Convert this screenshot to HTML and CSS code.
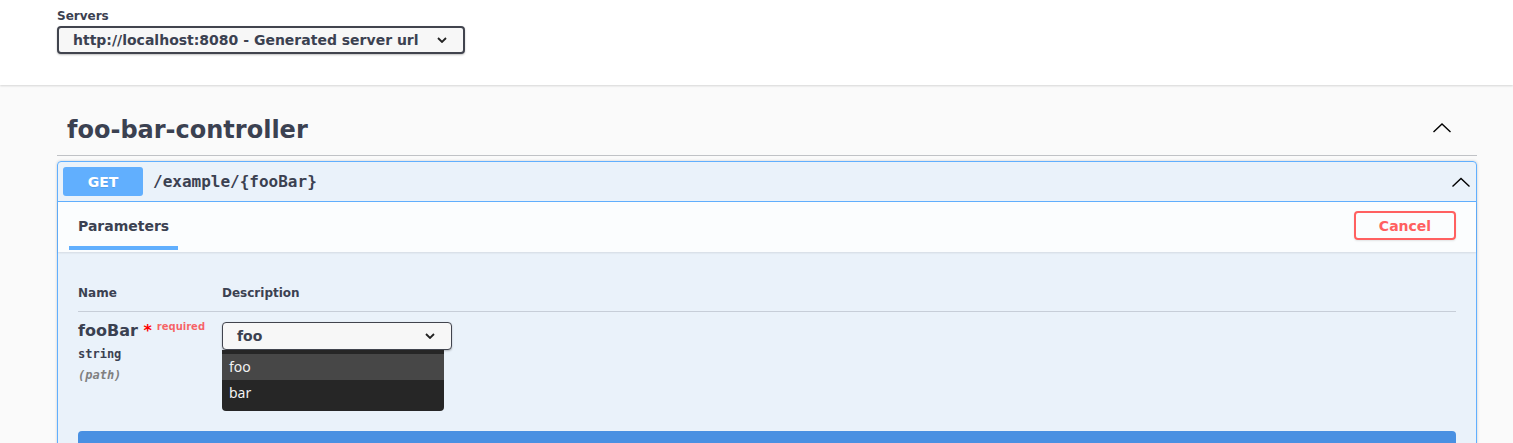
FILE: index.html
```html
<!DOCTYPE html>
<html lang="en">
<head>
<meta charset="utf-8">
<title>Swagger UI</title>
<link rel="stylesheet" href="styles.css">
</head>
<body>
<div class="scheme-container">
  <div class="schemes">
    <span class="servers-title">Servers</span>
    <div class="server-select">
      <span>http://localhost:8080 - Generated server url</span>
      <svg class="sel-chev" width="10" height="6" viewBox="0 0 10 6"><polyline points="1,1 5,5 9,1" fill="none" stroke="#222" stroke-width="1.8"/></svg>
    </div>
  </div>
</div>

<div class="main">
  <div class="opblock-tag">
    <h3 class="tag-title">foo-bar-controller</h3>
    <svg class="arrow tag-arrow" width="20" height="20" viewBox="0 0 20 20"><path d="M1.5 14 10 6l8.5 8" fill="none" stroke="#000" stroke-width="1.4"/></svg>
  </div>

  <div class="opblock">
    <div class="opblock-summary">
      <span class="method">GET</span>
      <span class="path">/example/{fooBar}</span>
      <svg class="arrow op-arrow" width="20" height="20" viewBox="0 0 20 20"><path d="M1.5 14.4 10 6.5l8.5 7.9" fill="none" stroke="#000" stroke-width="1.4"/></svg>
    </div>
    <div class="section-header">
      <div class="tab-item"><h4>Parameters</h4><span class="tab-line"></span></div>
      <button class="btn-cancel">Cancel</button>
    </div>
    <div class="table-container">
      <div class="param-row head">
        <div class="col-name">Name</div>
        <div class="col-desc">Description</div>
      </div>
      <div class="param-row body">
        <div class="col-name">
          <div class="param-name">fooBar<span class="star">&nbsp;*</span><span class="req">required</span></div>
          <div class="param-type">string</div>
          <div class="param-in">(path)</div>
        </div>
        <div class="col-desc">
          <div class="select-wrap">
            <div class="param-select">
              <span>foo</span>
              <svg class="sel-chev" width="10" height="6" viewBox="0 0 10 6"><polyline points="1,1 5,5 9,1" fill="none" stroke="#222" stroke-width="1.8"/></svg>
            </div>
            <div class="dropdown">
              <div class="opt active">foo</div>
              <div class="opt">bar</div>
            </div>
          </div>
        </div>
      </div>
    </div>
    <div class="execute-wrapper">
      <div class="btn-execute"></div>
    </div>
  </div>
</div>
</body>
</html>
```

FILE: styles.css
```css
* { box-sizing: border-box; }
html, body { margin: 0; padding: 0; }
body {
  font-family: "DejaVu Sans", sans-serif;
  color: #3b4151;
  background: #fafafa;
  overflow: hidden;
}
.scheme-container {
  background: #fff;
  height: 85px;
  box-shadow: 0 1px 2px 0 rgba(0,0,0,.15);
  padding: 8px 0 0 57px;
  position: relative;
}
.schemes { display: flex; flex-direction: column; align-items: flex-start; }
.servers-title {
  font-size: 12px;
  font-weight: bold;
  line-height: 16px;
}
.server-select {
  margin-top: 2px;
  width: 408px;
  height: 28px;
  border: 2px solid #41444e;
  border-radius: 4px;
  background: #f7f7f7;
  box-shadow: 0 1px 2px 0 rgba(0,0,0,.25);
  display: flex;
  align-items: center;
  justify-content: space-between;
  padding: 0 16px 0 14px;
  font-size: 14px;
  font-weight: bold;
  color: #3b4151;
}
.sel-chev { display: block; }
.main {
  padding: 17px 36px 0 57px;
}
.opblock-tag {
  height: 54px;
  border-bottom: 1px solid rgba(59,65,81,.3);
  display: flex;
  align-items: center;
  justify-content: space-between;
  padding: 2px 25px 0 10px;
}
.tag-title {
  margin: 0;
  font-size: 24px;
  line-height: 28px;
  font-weight: bold;
}
.arrow { display: block; }
.tag-arrow { position: relative; top: -2px; }
.opblock {
  margin-top: 5px;
  border: 1px solid #61affe;
  border-radius: 4px;
  background: rgba(97,175,254,.1);
  box-shadow: 0 0 3px rgba(0,0,0,.19);
  height: 400px;
}
.opblock-summary {
  display: flex;
  align-items: center;
  padding: 5px;
  border-bottom: 1px solid #61affe;
}
.method {
  width: 80px;
  height: 29px;
  background: #61affe;
  border-radius: 3px;
  color: #fff;
  font-size: 14px;
  font-weight: bold;
  display: flex;
  align-items: center;
  justify-content: center;
  text-shadow: 0 1px 0 rgba(0,0,0,.1);
}
.path {
  padding: 0 10px;
  font-family: "DejaVu Sans Mono", monospace;
  font-weight: bold;
  font-size: 16px;
  color: #3b4151;
  flex: 1;
}
.section-header {
  height: 50px;
  background: rgba(255,255,255,.8);
  box-shadow: 0 1px 2px rgba(0,0,0,.1);
  display: flex;
  align-items: center;
  justify-content: space-between;
  padding: 0 20px;
}
.tab-item {
  position: relative;
  align-self: stretch;
  display: flex;
  align-items: center;
}
.tab-item h4 {
  margin: 0;
  font-size: 14px;
  font-weight: bold;
  line-height: 18px;
  position: relative;
  top: -1px;
}
.tab-line {
  position: absolute;
  left: -9px;
  right: -9px;
  bottom: 2px;
  height: 4px;
  background: #61affe;
}
.btn-cancel {
  width: 102px;
  height: 29px;
  border: 2px solid #ff6060;
  border-radius: 4px;
  background: transparent;
  color: #ff6060;
  font-family: "DejaVu Sans", sans-serif;
  font-size: 14px;
  font-weight: bold;
  box-shadow: 0 1px 2px rgba(0,0,0,.1);
  padding: 0;
  margin-top: -3px;
}
.table-container {
  padding: 20px 20px 0 20px;
}
.param-row { display: flex; }
.param-row.head {
  font-size: 12px;
  font-weight: bold;
  line-height: 15px;
  padding: 14px 0 10px;
  border-bottom: 1px solid rgba(59,65,81,.2);
}
.param-row.body { padding: 10px 0; }
.col-name { width: 144px; }
.col-desc { flex: 1; }
.param-name {
  font-size: 16px;
  line-height: 18px;
  font-weight: bold;
  white-space: nowrap;
}
.star { color: red; }
.req {
  font-size: 10px;
  color: rgba(255,0,0,.6);
  position: relative;
  top: -6px;
  padding: 5px;
}
.param-type {
  font-family: "DejaVu Sans Mono", monospace;
  font-weight: bold;
  font-size: 12px;
  line-height: 14px;
  margin-top: 5px;
}
.param-in {
  font-family: "DejaVu Sans Mono", monospace;
  font-weight: bold;
  font-style: italic;
  font-size: 12px;
  line-height: 14px;
  color: #808080;
  margin-top: 7px;
}
.select-wrap {
  position: relative;
  width: 230px;
}
.param-select {
  width: 230px;
  height: 28px;
  border: 1px solid #41444e;
  border-radius: 4px;
  background: #f7f7f7;
  box-shadow: 0 1px 2px 0 rgba(0,0,0,.25);
  display: flex;
  align-items: center;
  justify-content: space-between;
  padding: 0 16px 0 14px;
  font-size: 14px;
  font-weight: bold;
  color: #3b4151;
}
.dropdown {
  position: absolute;
  top: 28px;
  left: 0;
  width: 222px;
  background: #262626;
  border-radius: 0 0 4px 4px;
  padding: 4px 0 6px;
  font-family: "Noto Sans", sans-serif;
  font-size: 14px;
  color: #f2f2f2;
  z-index: 5;
}
.opt {
  height: 25px;
  line-height: 25px;
  padding-left: 7px;
}
.opt.active { background: #474747; height: 26px; line-height: 26px; }
.execute-wrapper {
  padding: 39px 20px 0;
}
.btn-execute {
  height: 40px;
  background: #4990e2;
  border-radius: 4px;
}
```
